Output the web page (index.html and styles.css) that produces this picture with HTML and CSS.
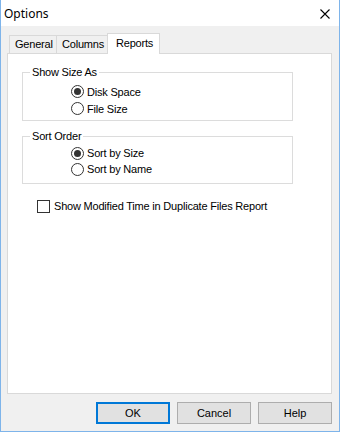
FILE: index.html
```html
<!DOCTYPE html>
<html lang="en">
<head>
  <meta charset="UTF-8" />
  <title>Options</title>
  <link rel="stylesheet" href="styles.css">
</head>
<body>
  <div class="window">
    <div class="titlebar">
      <span class="title">Options</span>
      <svg class="close" width="10" height="10" viewBox="0 0 10 10">
        <path d="M0.5 0.5 L9.5 9.5 M9.5 0.5 L0.5 9.5" stroke="#000" stroke-width="1.1" fill="none"/>
      </svg>
    </div>

    <div class="client">
      <div class="tabs">
        <div class="tab">General</div>
        <div class="tab">Columns</div>
        <div class="tab active">Reports</div>
      </div>

      <div class="panel">
        <fieldset class="group first">
          <legend>Show Size As</legend>
          <div class="option"><span class="radio checked"></span>Disk Space</div>
          <div class="option"><span class="radio"></span>File Size</div>
        </fieldset>

        <fieldset class="group second">
          <legend>Sort Order</legend>
          <div class="option"><span class="radio checked"></span>Sort by Size</div>
          <div class="option"><span class="radio"></span>Sort by Name</div>
        </fieldset>

        <div class="check-row"><span class="checkbox"></span>Show Modified Time in Duplicate Files Report</div>
      </div>

      <div class="buttons">
        <button class="btn default">OK</button>
        <button class="btn">Cancel</button>
        <button class="btn">Help</button>
      </div>
    </div>
  </div>
</body>
</html>
```

FILE: styles.css
```css
* {
  margin: 0;
  padding: 0;
  box-sizing: border-box;
}

body {
  font-family: 'Liberation Sans', Arial, sans-serif;
  font-size: 11px;
  letter-spacing: -0.2px;
  color: #000;
  background: #fff;
}

.window {
  width: 340px;
  height: 432px;
  display: flex;
  flex-direction: column;
  border: 1px solid #7eb4ea;
  border-top: none;
  background: #f0f0f0;
}

/* Title bar */
.titlebar {
  height: 26px;
  background: #fff;
  display: flex;
  align-items: center;
  justify-content: space-between;
  padding: 0 9px 0 3px;
}

.title {
  font-family: 'Noto Sans', sans-serif;
  font-size: 12px;
  letter-spacing: 0;
}

.close {
  display: block;
  margin-top: 1px;
}

/* Client area */
.client {
  flex: 1;
  display: flex;
  flex-direction: column;
  padding: 7px 7px 0 6px;
}

.tabs {
  display: flex;
  align-items: flex-end;
  height: 20px;
  padding-left: 2px;
}

.tab {
  height: 18px;
  line-height: 17px;
  padding: 0 5px;
  border: 1px solid #d9d9d9;
  border-bottom: none;
  background: #f0f0f0;
}

.tab + .tab {
  border-left: none;
}

.tab:nth-child(1) { width: 48px; }
.tab:nth-child(2) { width: 51px; }

.tab.active {
  position: relative;
  z-index: 1;
  width: 53px;
  height: 21px;
  margin-bottom: -1px;
  margin-left: -1px;
  line-height: 18px;
  padding-left: 8px;
  background: #fff;
  border-left: 1px solid #d9d9d9;
}

.panel {
  height: 341px;
  background: #fff;
  border: 1px solid #d9d9d9;
  padding: 12px 0 0 14px;
}

/* Group boxes */
.group {
  width: 271px;
  border: 1px solid #dcdcdc;
  padding: 0;
}

.group legend {
  margin-left: 7px;
  padding: 0 2px;
  line-height: 13px;
}

.group.first {
  padding-top: 4px;
  padding-bottom: 3px;
}

.group.first .option {
  height: 17px;
}

.group.second {
  margin-top: 9px;
  padding-top: 2px;
  padding-bottom: 6px;
}

.group.second .option {
  height: 16px;
}

.option {
  display: flex;
  align-items: center;
  margin-left: 48px;
}

.radio {
  width: 13px;
  height: 13px;
  border: 1px solid #333;
  border-radius: 50%;
  margin-right: 3px;
  display: flex;
  align-items: center;
  justify-content: center;
  background: #fff;
}

.radio.checked::after {
  content: "";
  width: 7px;
  height: 7px;
  border-radius: 50%;
  background: #333;
}

.check-row {
  display: flex;
  align-items: center;
  height: 16px;
  margin-top: 14px;
  padding-left: 15px;
}

.checkbox {
  width: 13px;
  height: 13px;
  border: 1px solid #333;
  background: #fff;
  margin-right: 4px;
}

/* Buttons */
.buttons {
  display: flex;
  justify-content: flex-end;
  gap: 7px;
  margin-top: 8px;
}

.btn {
  width: 74px;
  height: 22px;
  font-family: 'Liberation Sans', Arial, sans-serif;
  font-size: 11px;
  color: #000;
  background: #e1e1e1;
  border: 1px solid #adadad;
}

.btn.default {
  border: 2px solid #0078d7;
}
```
